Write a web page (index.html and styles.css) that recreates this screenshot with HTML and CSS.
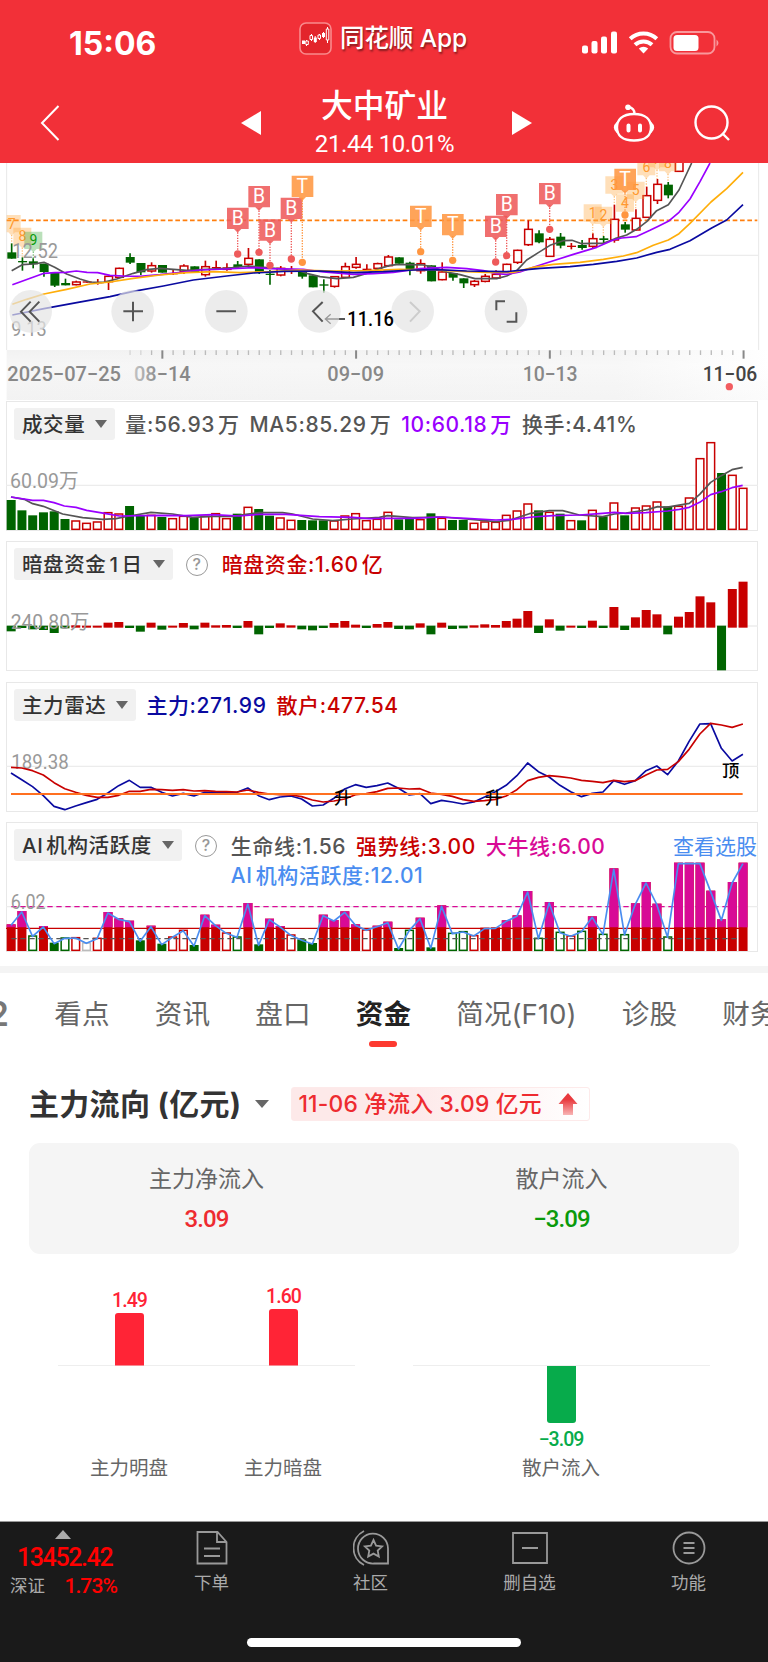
FILE: index.html
```
<!DOCTYPE html>
<html lang="zh-CN">
<head>
    <meta charset="UTF-8">
    <meta name="viewport" content="width=device-width, initial-scale=1.0">
    <title>大中矿业</title>
    <link rel="stylesheet" href="styles.css">
</head>
<body>
    <header class="top">
        <div class="status">
            <span class="clock">15:06</span>
            <div class="app">
                <svg width="33" height="33" viewBox="0 0 33 33">
                    <rect x="1" y="1" width="31" height="31" rx="6" fill="#e3252b" stroke="#f98a8c" stroke-width="1.6"/>
                    <path d="M7.500 18v6M12.500 12v7M16.200 14v7M20.500 12v6M24.500 10v6M28.500 5v16" stroke="#fff" stroke-width="1"/>
                    <path d="M3 18.500h3v3.500h-3zM14.800 15.500h3v4.500h-3zM23 11h3v4h-3z" fill="#fff"/>
                    <path d="M6.800 19h2.500v3.500h-2.500zM11 13.500h2.500v4h-2.500zM19 13h2.500v3.500h-2.500zM27.300 7h2.500v11h-2.500z" fill="#e3252b" stroke="#fff" stroke-width="1"/>
                </svg>
                <span>同花顺 App</span>
            </div>
            <svg class="signals" width="138" height="26" viewBox="0 0 138 26">
                <g fill="#fff">
                    <rect x="0" y="15.500" width="6" height="8" rx="2"/>
                    <rect x="9.500" y="11" width="6" height="12.500" rx="2"/>
                    <rect x="19" y="6.500" width="6" height="17" rx="2"/>
                    <rect x="29" y="1.500" width="6" height="22" rx="2"/>
                    <path d="M61.500 23.500l-4.700-5a7 7 0 0 1 9.400 0z"/>
                    <rect x="91.500" y="5" width="25" height="16" rx="3.500"/>
                    <path d="M134.500 9.500q4 3.500 0 7z" opacity=".5"/>
                </g>
                <g fill="none" stroke="#fff" stroke-width="4">
                    <path d="M48.200 8.800a19.500 19.500 0 0 1 26.600 0M53 14.800a12.500 12.500 0 0 1 17 0"/>
                </g>
                <rect x="88.500" y="2" width="44" height="21.500" rx="6.500" fill="none" stroke="#fff" stroke-width="1.800" opacity=".5"/>
            </svg>
        </div>
        <div class="nav">
            <svg class="back" width="20" height="36" viewBox="0 0 20 36"><path d="M18.500 1L2 18l16.500 17" fill="none" stroke="#fff" stroke-width="2"/></svg>
            <svg class="prev" width="20" height="24" viewBox="0 0 20 24"><path d="M20 0v24L0 12z" fill="#fff"/></svg>
            <div class="stock">
                <h1>大中矿业</h1>
                <p>21.44 10.01%</p>
            </div>
            <svg class="next" width="20" height="24" viewBox="0 0 20 24"><path d="M0 0v24l20-12z" fill="#fff"/></svg>
            <svg class="robot" width="42" height="40" viewBox="0 0 42 40">
                <g fill="none" stroke="#fff" stroke-width="2.400">
                    <path d="M21 11C9 11 4 17 4 24.500S9 37.500 21 37.500s17-5.500 17-13S33 11 21 11z"/>
                    <path d="M4.500 20q-5 4.500 0 9M37.500 20q5 4.500 0 9M21.500 11q0-6-6-7"/>
                    <path d="M15.500 22.500v5M27 22.500v5" stroke-width="4" stroke-linecap="round"/>
                </g>
                <circle cx="15" cy="4.300" r="2.800" fill="#fff"/>
            </svg>
            <svg class="search" width="36" height="38" viewBox="0 0 36 38"><circle cx="17.500" cy="18.500" r="16" fill="none" stroke="#fff" stroke-width="2.400"/><path d="M28.500 29.500l6.500 6.500" stroke="#fff" stroke-width="2.400"/></svg>
        </div>
    </header>

    <svg class="kline" id="kline" viewBox="0 9 2304 711"></svg>

    <main class="panels">
        <section class="panel">
            <svg class="plot" id="volume" viewBox="20 18 2256 390"></svg>
            <div class="legend">
                <span class="chip">成交量<i></i></span>
                <div class="items vol">
                    <span class="gray">量:56.93<b>万</b></span>
                    <span class="gray">MA5:85.29<b>万</b></span>
                    <span class="purple">10:60.18<b>万</b></span>
                    <span class="gray">换手:4.41%</span>
                </div>
            </div>
        </section>
        <section class="panel">
            <svg class="plot" id="dark" viewBox="20 438 2256 390"></svg>
            <div class="legend">
                <span class="chip">暗盘资金<b>1</b><b>日</b><i></i></span>
                <span class="help">?</span>
                <div class="items"><span class="red">暗盘资金:1.60<b>亿</b></span></div>
            </div>
        </section>
        <section class="panel">
            <svg class="plot" id="radar" viewBox="20 21 2256 390"></svg>
            <div class="legend">
                <span class="chip">主力雷达<i></i></span>
                <div class="items">
                    <span class="navy">主力:271.99</span>
                    <span class="red">散户:477.54</span>
                </div>
            </div>
        </section>
        <section class="panel">
            <svg class="plot" id="active" viewBox="20 441 2256 390"></svg>
            <div class="legend">
                <span class="chip">AI<b>机</b>构活跃度<i></i></span>
                <span class="help">?</span>
                <div class="items wrap">
                    <span class="gray">生命线:1.56</span>
                    <span class="red">强势线:3.00</span>
                    <span class="pink">大牛线:6.00</span>
                    <span class="blue">AI<b>机</b>构活跃度:12.01</span>
                </div>
                <a class="pick">查看选股</a>
            </div>
        </section>
    </main>

    <nav class="tabs">
        <span class="cut">2</span>
        <span>看点</span>
        <span>资讯</span>
        <span>盘口</span>
        <span class="on">资金</span>
        <span>简况(F10)</span>
        <span>诊股</span>
        <span>财务</span>
    </nav>

    <section class="flow">
        <div class="flow-head">
            <h2>主力流向 (亿元)</h2>
            <i class="caret"></i>
            <div class="badge">
                <span>11-06 净流入 3.09 亿元</span>
                <svg width="20" height="23" viewBox="0 0 20 23">
                    <defs><linearGradient id="up" x1="0" y1="0" x2="0" y2="1"><stop offset=".3" stop-color="#e93a3e"/><stop offset="1" stop-color="#f8b4b4"/></linearGradient></defs>
                    <path d="M10 0l9.500 11h-4.500v11h-10v-11h-4.500z" fill="url(#up)"/>
                </svg>
            </div>
        </div>
        <div class="card">
            <div><p>主力净流入</p><strong class="up">3.09</strong></div>
            <div><p>散户流入</p><strong class="down">−3.09</strong></div>
        </div>
        <svg class="bars" id="bars" viewBox="0 -1 768 267"></svg>
    </section>

    <footer class="bottom">
        <div class="index">
            <i></i>
            <strong>13452.42</strong>
            <p><span>深证</span><em>1.73%</em></p>
        </div>
        <div class="menu">
            <a><svg width="36" height="36" viewBox="0 0 36 36"><path d="M3.500 2h20l9 10v21.500h-29zM23 2v10h9.500M10 18.500h16M10 26h16"/></svg>下单</a>
            <a><svg width="36" height="36" viewBox="0 0 36 36"><path d="M35 33.500H21a15 15 0 1 1 14-15zM11 1a19 19 0 0 0 0 34M20.500 10l2.600 5.600 6 .7-4.400 4.200 1.100 6-5.300-2.900-5.300 2.900 1.100-6-4.400-4.200 6-.7z"/></svg>社区</a>
            <a><svg width="36" height="36" viewBox="0 0 36 36"><path d="M1 3h34v30h-34zM10 18h16"/></svg>删自选</a>
            <a><svg width="36" height="36" viewBox="0 0 36 36"><circle cx="18" cy="18" r="15.500"/><path d="M12.500 13h11M12.500 18h11M12.500 23h11"/></svg>功能</a>
        </div>
        <div class="home"></div>
    </footer>

    <script src="charts.js"></script>
</body>
</html>
```
FILE: styles.css
```
* {
    box-sizing: border-box;
}

body {
    margin: 0;
    width: 768px;
    height: 1662px;
    overflow: hidden;
    background: #fff;
    font-family: Inter, "Noto Sans CJK SC", sans-serif;
    color: #333;
    display: flex;
    flex-direction: column;
}

h1, h2, p {
    margin: 0;
}

svg {
    display: block;
    flex: none;
}

/* header */
.top {
    height: 163px;
    background: #f23038;
    color: #fff;
    flex: none;
}

.status {
    height: 76px;
    padding: 10px 48px 0 69px;
    display: flex;
    align-items: center;
}

.clock {
    width: 230px;
    font-size: 32px;
    font-weight: 700;
    letter-spacing: 0;
}

.app {
    display: flex;
    align-items: center;
    gap: 8px;
    font-size: 24.500px;
    font-weight: 500;
    margin-top: -10px;
    letter-spacing: -0.1px;
    white-space: nowrap;
}

.app span {
    margin-top: -3px;
    text-shadow: 1px 2px 2px rgba(0, 0, 0, 0.45);
}

.signals {
    margin-left: auto;
}

.nav {
    height: 87px;
    padding: 7px 38px 0 40px;
    display: flex;
    align-items: center;
}

.nav .prev {
    margin-left: 181px;
}

.stock {
    width: 251px;
    padding-right: 4px;
    text-align: center;
}

.stock h1 {
    font-size: 31.800px;
    line-height: 40px;
    font-weight: 500;
    margin-top: -1px;
}

.stock p {
    font: 24px/32px Roboto, sans-serif;
    letter-spacing: -0.400px;
    margin-top: 2px;
}

.nav .robot {
    margin-left: 81px;
}

.nav .search {
    margin-left: auto;
}

.kline {
    width: 768px;
    height: 237px;
}

.kline text, .plot text {
    font-family: Roboto, "Noto Sans CJK SC", sans-serif;
}

/* indicator panels */
.panels {
    height: 566px;
    padding: 1px 10px 0 6px;
    display: flex;
    flex-direction: column;
    gap: 10px;
    flex: none;
}

.panel {
    height: 130px;
    display: grid;
    border: 1px solid #e8e8e8;
    flex: none;
}

.panel:nth-child(3) {
    margin-top: 1px;
}

.plot, .legend {
    grid-area: 1 / 1;
}

.plot {
    width: 752px;
    height: 130px;
    margin: -1px;
}

.legend {
    position: relative;
    display: flex;
    align-items: flex-start;
    padding: 6px 0 0 7px;
    font-size: 20.500px;
    line-height: 34px;
    font-weight: 500;
    white-space: nowrap;
}

.legend b {
    font-weight: inherit;
    margin-left: 3px;
}

.chip {
    height: 32px;
    padding: 2px 8px 0 8px;
    background: #f1f1f1;
    border-radius: 3px;
    letter-spacing: 0.600px;
    display: flex;
    align-items: center;
}

.chip i, .caret {
    border: 6px solid transparent;
    border-top: 8px solid #666;
    border-bottom: 0;
    margin-left: 10px;
}

.chip i {
    margin-top: -2px;
}

.help {
    width: 22px;
    height: 22px;
    margin: 6px 4px 0 13px;
    border: 1.500px solid #999;
    border-radius: 50%;
    color: #999;
    font-size: 16px;
    line-height: 19px;
    text-align: center;
}

.items {
    display: flex;
    gap: 10px;
    margin-left: 10px;
    font-size: 21px;
    letter-spacing: 0.600px;
}

.wrap {
    width: 440px;
    flex-wrap: wrap;
    gap: 0 10px;
    line-height: 29px;
    padding-top: 3px;
}

.pick {
    position: absolute;
    right: 0;
    top: 7px;
    color: #4a8df0;
    font-weight: 400;
    font-size: 21px;
}

.gray { color: #555; }
.purple { color: #9a00ff; }
.red { color: #c80000; }
.navy { color: #0a0aa0; }
.pink { color: #d80a96; }
.blue { color: #4a8df0; }

/* tabs */
.tabs {
    height: 92px;
    border-top: 7px solid #f4f4f4;
    display: flex;
    gap: 45.300px;
    padding-top: 21px;
    font-size: 27.600px;
    line-height: 40px;
    color: #666;
    white-space: nowrap;
    overflow: hidden;
    flex: none;
}

.tabs .cut {
    width: 9px;
    display: flex;
    justify-content: flex-end;
    color: #777;
    font-size: 34px;
    font-weight: 600;
}

.tabs .on {
    color: #222;
    font-weight: 700;
    display: flex;
    flex-direction: column;
    align-items: center;
}

.tabs .on::after {
    content: "";
    width: 28px;
    height: 6px;
    margin-top: 7px;
    border-radius: 3px;
    background: #fd3a30;
}

/* money flow */
.flow {
    height: 463px;
    flex: none;
}

.flow-head {
    height: 85px;
    padding: 7px 0 0 29px;
    display: flex;
    align-items: center;
}

.flow-head h2 {
    font-size: 30px;
    letter-spacing: 0.300px;
    margin-top: -4px;
    white-space: nowrap;
}

.caret {
    border-width: 8px 7px 0;
    margin: 0 22px 0 14px;
}

.badge {
    width: 299px;
    height: 34px;
    padding: 0 11px 0 6px;
    display: flex;
    align-items: center;
    justify-content: space-between;
    border: 1px solid #fdeaea;
    border-radius: 3px;
    background: linear-gradient(90deg, #fde9e9 40%, #fff);
    color: #ee2b30;
    font-size: 22.800px;
    font-weight: 500;
    white-space: nowrap;
}

.badge span {
    margin-top: -3px;
    letter-spacing: 0.200px;
}

.card {
    height: 111px;
    margin: 0 29px;
    border-radius: 11px;
    background: #f5f5f5;
    display: flex;
    text-align: center;
}

.card div {
    width: 50%;
    padding-top: 20px;
}

.card p {
    font-size: 23px;
    line-height: 32px;
    color: #666;
}

.card strong {
    display: block;
    margin-top: 8px;
    font: 500 24px/32px Roboto, sans-serif;
    letter-spacing: -0.900px;
}

.up { color: #ee2b30; }
.down { color: #0a9a0a; }

.bars {
    width: 768px;
    height: 267px;
}

.bars text {
    font-family: Roboto, "Noto Sans CJK SC", sans-serif;
    text-anchor: middle;
}

.bars .num {
    font-weight: 500;
    letter-spacing: -0.900px;
}

/* bottom bar */
.bottom {
    position: relative;
    height: 141px;
    border-top: 1px solid #999;
    background: #1a1a1a;
    color: #aaa;
    display: flex;
    flex: none;
}

.index {
    width: 130px;
    display: flex;
    flex-direction: column;
    padding: 8px 0 0 10px;
    font-family: Roboto, "Noto Sans CJK SC", sans-serif;
}

.index i {
    width: 0;
    margin-left: 45px;
    border: 8px solid transparent;
    border-bottom: 9px solid #aaa;
    border-top: 0;
}

.index strong {
    margin: 4px 0 0 7px;
    font-size: 25px;
    line-height: 30px;
    font-weight: 500;
    letter-spacing: -1.400px;
    color: #f00;
}

.index p {
    width: 107px;
    display: flex;
    justify-content: space-between;
    font-size: 17.500px;
    line-height: 27px;
}

.index em {
    color: #f00;
    font-style: normal;
    font-size: 21px;
    font-weight: 500;
    letter-spacing: -0.900px;
}

.menu {
    display: flex;
    padding: 8px 0 0 2px;
}

.menu a {
    width: 159px;
    display: flex;
    flex-direction: column;
    align-items: center;
    font-size: 17.500px;
    line-height: 34px;
}

.menu svg {
    fill: none;
    stroke: #999;
    stroke-width: 1.800;
}

.home {
    position: absolute;
    left: 247px;
    bottom: 15px;
    width: 274px;
    height: 9px;
    border-radius: 5px;
    background: #fff;
}
```
FILE: charts.js
```
const RED = "#c80000";
const GREEN = "#006400";
const STEP = 32.29;
const cx = i => 35 + STEP * i;

function line(points, color, width = 5) {
    return `<polyline points="${points}" fill="none" stroke="${color}" stroke-width="${width}" stroke-linejoin="round"/>`;
}

function series(values, color) {
    return line(values.map((v, i) => `${cx(i)},${v}`).join(" "), color);
}

function bar(i, top, bottom, color, hollow) {
    if (hollow) {
        return `<rect x="${cx(i) - 11}" y="${top + 2}" width="23" height="${Math.max(bottom - top - 4, 1)}" fill="#fff" stroke="${color}" stroke-width="4.5"/>`;
    }
    return `<rect x="${cx(i) - 13}" y="${top}" width="27" height="${bottom - top}" fill="${color}"/>`;
}

function label(x, y, text, size, color, width) {
    return `<text x="${x}" y="${y}" font-size="${size}" fill="${color}" textLength="${width}" lengthAdjust="spacingAndGlyphs">${text}</text>`;
}

function rule(y, color = "#ececec", extra = "", x1 = 20, x2 = 2276) {
    return `<path d="M${x1} ${y}H${x2}" stroke="${color}" stroke-width="4" ${extra}/>`;
}

// K line: color, body top, body bottom, high, low
const candles = `g277,296,250,296 g303,307,292,332 g304,313,295,325 g311,336,311,350 g338,377,338,381 g369,376,356,376
r364,376,362,376 r364,368,364,368 r366,370,357,374 r347,367,347,390 r323,354,323,354 g291,308,280,312 g309,337,309,345
r315,335,307,338 g315,338,315,338 r339,343,330,345 r316,337,313,342 g319,338,319,338 r318,346,302,350 r321,325,302,330
r322,330,310,332 g313,321,303,324 r293,315,264,320 g298,338,298,342 g341,345,330,374 r323,347,318,349 r327,331,318,342
g335,350,335,356 g346,382,346,382 g373,377,358,398 r348,381,348,383 r318,354,308,354 r311,324,291,326 r326,330,313,332
r309,327,308,330 r289,319,285,320 g292,311,292,311 g308,328,305,346 r309,334,298,341 g316,364,316,364 r334,361,307,361
g339,353,339,362 g355,370,355,384 r362,376,360,381 r347,366,342,367 r341,356,331,356 r311,338,311,338 r269,309,269,312
r206,256,181,258 g220,247,211,250 r236,291,231,291 g230,257,219,265 r257,261,249,268 g255,264,240,269 r234,261,220,264
g235,240,228,249 r176,242,134,248 g193,209,186,218 r173,212,148,212 r105,174,80,174 r71,123,57,132 g74,106,66,115 r-20,36,-20,36`
    .split(/\s+/).map(s => [s[0], ...s.slice(1).split(",").map(Number)]);

const flags = [
    ["B", 713, 143, 282], ["B", 777, 78, 277], ["B", 810, 178, 316], ["B", 874, 113, 297], ["T", 907, 47, 307],
    ["T", 1262, 137, 275], ["T", 1358, 162, 301], ["B", 1487, 167, 306], ["B", 1520, 102, 287], ["B", 1649, 69, 208],
    ["T", 1875, 26, 165]
];

const counts = [
    ["7", 35, 165, 250], ["8", 67, 203, 290], ["9", 100, 215, 300, "#41a841"], ["1", 1778, 133, 222], ["2", 1810, 140, 228],
    ["3", 1843, 49, 134], ["4", 1875, 103, 186], ["5", 1907, 65, 148], ["6", 1939, -6, 80], ["7", 1971, -30, 57], ["8", 2004, -18, 66]
];

function drawKline() {
    let out = `<defs>
        <linearGradient id="axisBg"><stop offset="0" stop-color="#f2f2f2"/><stop offset=".8" stop-color="#f4f4f4"/><stop offset="1" stop-color="#fff"/></linearGradient>
        <linearGradient id="shade" x2="0" y2="1"><stop offset="0" stop-color="#fff" stop-opacity="0"/><stop offset=".3" stop-color="#fff" stop-opacity=".35"/><stop offset="1" stop-color="#f3f3f3" stop-opacity=".3"/></linearGradient>
        <linearGradient id="fade" gradientUnits="userSpaceOnUse" x1="395" y1="0" x2="480" y2="0"><stop offset="0" stop-color="#c8c8c8"/><stop offset="1" stop-color="#888"/></linearGradient>
    </defs>`;
    out += `<path d="M20 9V570M2276 9V570" stroke="#e8e8e8" stroke-width="3"/>` + rule(286);
    out += `<path d="M20 181H2272" stroke="#ff7f0e" stroke-width="5" stroke-dasharray="14 8"/>`;

    candles.forEach(([c, top, bottom, high, low], i) => {
        const color = c === "r" ? RED : GREEN;
        out += `<path d="M${cx(i)} ${high}V${low}" stroke="${color}" stroke-width="5"/>`;
        out += bar(i, top, bottom, color, c === "r" && bottom - top > 6);
    });

    out += line("35,332 67,314 100,312 132,307 164,322 200,342 240,357 270,366 310,367 350,357 400,340 440,329 480,325 520,328 560,331 620,328 680,325 745,318 800,323 850,327 890,330 920,340 960,350 1010,356 1060,352 1100,340 1140,325 1170,316 1190,314 1230,314 1270,315 1300,322 1340,336 1380,344 1425,356 1490,356 1520,348 1550,332 1580,300 1615,278 1650,256 1690,242 1716,241 1745,251 1775,250 1810,250 1845,236 1880,225 1910,208 1940,185 1970,152 2005,134 2037,90 2075,9", "#555");
    out += line("37,374 132,340 165,338 197,337 229,333 261,337 293,338 330,346 370,348 420,349 480,344 550,336 600,330 680,327 760,323 810,326 910,328 970,336 1060,343 1120,341 1180,337 1260,326 1340,322 1400,326 1450,332 1490,341 1520,343 1560,336 1600,322 1660,302 1720,283 1790,262 1840,240 1865,234 1908,230 1950,211 1975,199 2005,184 2037,157 2070,117 2100,65 2130,9", "#9a00ff");
    out += line("37,433 80,418 132,402 200,388 270,372 330,366 400,355 480,345 560,338 640,335 720,338 810,335 900,330 1000,333 1100,332 1200,328 1300,330 1400,335 1460,337 1540,337 1600,322 1660,313 1740,307 1810,298 1870,288 1910,278 1960,256 2005,240 2037,221 2070,190 2133,126 2180,86 2229,37", "#ffae0a");
    out += line("37,465 132,446 230,428 330,410 400,394 490,378 580,360 680,348 760,339 850,334 960,333 1060,338 1150,335 1240,330 1310,329 1400,333 1520,335 1580,329 1620,325 1710,320 1780,313 1850,304 1910,294 1970,277 2010,268 2070,242 2135,204 2180,180 2229,134", "#0a0aa0");

    counts.forEach(([n, x, y, end, color = "#ffa53c"]) => {
        out += `<path d="M${x} ${y + 60}V${end}" stroke="${color}" stroke-width="4" stroke-dasharray="4 4" opacity=".6"/>`;
        out += `<path d="M${Math.max(x - 27, 20)} ${y}H${x + 27}V${y + 52}H${x + 10}L${x} ${y + 62}L${x - 10} ${y + 52}H${Math.max(x - 27, 20)}z" fill="${color}" opacity=".36"/>`;
        out += `<text x="${x}" y="${y + 41}" font-size="42" text-anchor="middle" fill="${n === "9" ? "#0a9a0a" : "#ff9a2e"}">${n}</text>`;
    });

    flags.forEach(([t, x, y, end]) => {
        const color = t === "B" ? "#ee5a5a" : "#ff9640";
        out += `<path d="M${x} ${y + 66}V${end}" stroke="${color}" stroke-width="4" stroke-dasharray="4 4"/><circle cx="${x}" cy="${end}" r="11" fill="${color}"/>`;
        out += `<path d="M${x - 32} ${y}h65v64h-22l-11 11-11-11h-21z" fill="${color}" opacity=".87"/>`;
        out += `<text x="${x}" y="${y + 52}" font-size="58" text-anchor="middle" fill="#fff">${t}</text>`;
    });

    out += label(37, 294, "12.52", 58, "#999", 137) + label(34, 527, "9.13", 58, "#999", 106);

    // zoom and pan buttons
    [92, 398, 679, 958, 1238, 1518].forEach(x => {
        out += `<circle cx="${x}" cy="454" r="64" fill="#e4e4e4" opacity=".7"/>`;
    });
    out += `<g fill="none" stroke="#555" stroke-width="6">
        <path d="M92 425L63 455l29 30M118 425L89 455l29 30M370 454h59M399 425v59M649 454h59M968 426l-29 28 29 31"/>
        <path d="M1489 451v-27h26M1549 457v28h-29"/>
        <path d="M1230 426l29 28-29 31" stroke="#ccc"/>
        <path d="M1020 477H976M992 463l-16 14 16 14" stroke="#999" stroke-width="4"/>
        <path d="M1018 477h17" stroke="#000" stroke-width="4"/>
    </g>`;
    out += `<text x="1042" y="499" font-size="60" font-weight="500" textLength="140" lengthAdjust="spacingAndGlyphs">11.16</text>`;

    // date axis
    out += `<rect x="20" y="570" width="2284" height="150" fill="url(#axisBg)"/><rect x="20" y="570" width="2284" height="150" fill="url(#shade)"/>`;
    for (let i = 11; i < 69; i++) {
        const major = i === 14 || i === 32 || i === 50 || i === 68;
        out += `<path d="M${cx(i)} 571v${major ? 25 : 14}" stroke="${major ? "#888" : "#bbb"}" stroke-width="${major ? 6 : 4}" opacity="${i < 13 ? 0.5 : 1}"/>`;
    }
    out += `<g font-weight="500">` + label(22, 663, "2025−07−25", 62, "#888", 341) + label(402, 663, "08−14", 62, "url(#fade)", 170)
        + label(982, 663, "09−09", 62, "#888", 170) + label(1568, 663, "10−13", 62, "#888", 165) + label(2108, 663, "11−06", 62, "#444", 164) + "</g>";
    out += `<circle cx="2188" cy="680" r="11" fill="#f25c60"/>`;
    document.getElementById("kline").innerHTML = out;
}

function parse(str) {
    return str.trim().split(/\s+/).map(s => [s[0], Number(s.slice(1))]);
}

const volumes = parse(`g315 g346 g361 g352 g349 g372 r376 r383 r379 r351 r355 g333 g362 r359 g366 r369 r362 g369 r362 r354
r369 g356 r335 g342 g362 r367 r374 g375 g376 g376 r376 r361 r354 r375 r371 r350 g373 g370 r372 g355 r368 g375 g375 r383
r379 r380 r359 r346 r325 g346 r350 g356 r375 g376 r344 g364 r322 g361 r337 r331 r319 g334 r332 r307 r189 r141 g234 r239 r278`);

function drawVolume() {
    let out = rule(271);
    volumes.forEach(([c, top], i) => {
        out += bar(i, top, 405, c === "r" ? RED : GREEN, c === "r");
    });
    out += line("35,306 75,313 100,326 132,334 190,357 250,368 310,373 350,371 390,363 455,352 520,357 580,367 640,364 700,364 740,358 780,353 850,353 880,357 940,372 1000,377 1060,372 1140,367 1165,362 1240,368 1330,366 1400,372 1490,380 1530,376 1560,366 1590,356 1650,347 1690,347 1740,360 1810,365 1845,357 1880,354 1920,348 1945,344 1975,335 2000,337 2035,331 2070,325 2101,298 2134,262 2166,242 2198,224 2230,217", "#555");
    out += line("35,306 100,316 132,316 164,323 195,333 230,337 262,346 320,356 360,363 480,361 560,362 640,359 720,363 780,358 860,358 960,365 1060,367 1110,371 1160,370 1240,370 1320,366 1400,370 1490,375 1540,373 1600,366 1660,362 1740,360 1800,356 1845,352 1880,355 1940,353 2005,348 2040,343 2070,337 2101,322 2134,299 2166,290 2198,278 2230,271", "#9a00ff");
    out += label(32, 280, "60.09万", 60, "#999", 206);
    document.getElementById("volume").innerHTML = out;
}

const darkMoney = parse(`g709 g699 g703 g705 g714 g700 r691 r692 r692 r683 r681 g699 g710 r683 g704 r692 r684 g703 r683 r691
r690 g699 r678 g718 g699 r685 r691 g703 g706 g699 r684 r678 r689 g699 r687 r681 g702 g703 r685 g718 r683 g702 g700 r691
r688 r690 r678 r671 r648 g714 r673 g707 r692 g699 r677 g699 r636 g705 r667 r645 r658 g718 r665 r651 r604 r622 g826 r582 r560`);

function drawDark() {
    let out = rule(693);
    darkMoney.forEach(([c, v], i) => {
        out += c === "r" ? bar(i, v, 698, RED) : bar(i, 692, v, GREEN);
    });
    out += label(34, 701, "240.80万", 60, "#999", 236);
    document.getElementById("dark").innerHTML = out;
}

const mainForce = [294, 314, 335, 362, 394, 404, 393, 383, 373, 354, 332, 316, 337, 337, 352, 363, 355, 363, 352, 353, 353, 352, 339, 362, 374, 366, 363, 372, 393, 390, 370, 342, 329, 337, 332, 324, 340, 360, 356, 386, 376, 381, 387, 381, 366, 350, 331, 302, 264, 290, 306, 331, 350, 365, 355, 351, 317, 328, 317, 287, 273, 299, 258, 199, 147, 146, 220, 258, 238];
const retail = [277, 279, 287, 300, 323, 341, 352, 361, 367, 367, 361, 349, 349, 343, 344, 346, 344, 348, 347, 349, 350, 351, 345, 352, 357, 359, 360, 365, 375, 381, 378, 372, 359, 356, 350, 340, 339, 342, 341, 354, 358, 364, 374, 379, 377, 373, 363, 344, 317, 307, 302, 305, 309, 316, 319, 323, 316, 320, 317, 300, 285, 283, 260, 223, 177, 145, 150, 157, 147];

function drawRadar() {
    let out = rule(274) + label(36, 282, "189.38", 60, "#999", 172);
    out += series(mainForce, "#0a0aa0") + series(retail, RED);
    out += line("35,357 2230,357", "#ff7020", 6);
    [["升", 1030, 388], ["升", 1483, 388], ["顶", 2194, 307]].forEach(([t, x, y]) => {
        out += `<text x="${x}" y="${y}" font-size="52" font-weight="500" text-anchor="middle">${t}</text>`;
    });
    document.getElementById("radar").innerHTML = out;
}

// R/G filled, r/g/n hollow
const activity = parse(`R748 R708 g781 R753 G803 g787 r786 n802 r788 R711 R730 R737 G796 R752 G806 r784 r764 G810 R719 R749
r772 g784 R684 G808 R731 R753 r778 G793 G804 R719 R735 R709 R748 r763 R752 R740 G819 g764 R728 G817 R691 g773 g768 r780
R758 R757 R736 R721 R648 g788 R681 g770 r781 g767 R724 g776 R580 g777 R685 R621 R686 g784 R563 R563 R563 R647 R733 R621 R563`);

function drawActive() {
    let out = rule(695);
    activity.forEach(([c, top], i) => {
        const color = { r: RED, g: GREEN, n: "#bbb" }[c.toLowerCase()];
        out += bar(i, top, 828, color, c !== "R" && c !== "G");
        if (c === "R" && top < 757) {
            out += bar(i, top, 757, "#d80a96");
        }
    });
    out += rule(695, "#d80a96", 'stroke-dasharray="16 11"', 36, 2218) + rule(760, RED, "", 20, 2230) + rule(791, "#555", 'stroke-dasharray="16 11"', 36, 2218);
    out += series(activity.map(a => a[1] + 3), "#4a8df0");
    out += label(34, 703, "6.02", 60, "#999", 105);
    document.getElementById("active").innerHTML = out;
}

function drawBars() {
    const text = (x, y, t, color, cls) => `<text x="${x}" y="${y}" class="${cls}" font-size="19.5" fill="${color}">${t}</text>`;
    document.getElementById("bars").innerHTML = `
        <path d="M58 110.500H355M413 110.500H710" stroke="#eee"/>
        <path d="M115 110.500V61q0-3 3-3h23q3 0 3 3v49.500zM269 110.500V57q0-3 3-3h23q3 0 3 3v53.500z" fill="#ff2436"/>
        <path d="M547 111V165q0 3 3 3h23q3 0 3-3V111z" fill="#07ab4b"/>`
        + text(129.500, 52, "1.49", "#ff2436", "num") + text(283.500, 48, "1.60", "#ff2436", "num") + text(561, 191, "−3.09", "#07ab4b", "num")
        + text(129, 219.500, "主力明盘", "#666", "name") + text(283, 219.500, "主力暗盘", "#666", "name") + text(561, 219.500, "散户流入", "#666", "name");
}

drawKline();
drawVolume();
drawDark();
drawRadar();
drawActive();
drawBars();
```
